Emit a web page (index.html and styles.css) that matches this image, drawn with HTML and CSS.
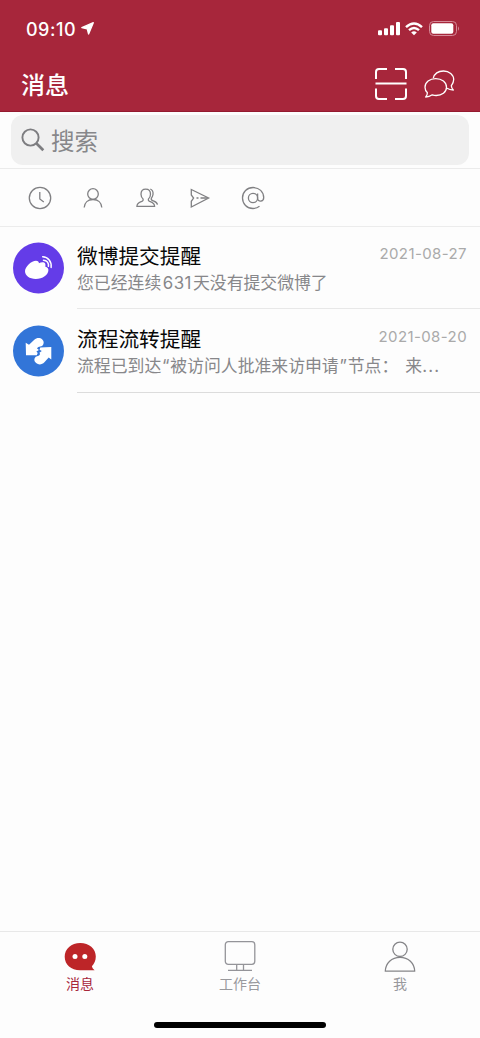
FILE: index.html
```html
<!DOCTYPE html>
<html lang="zh-CN">
<head>
<meta charset="utf-8">
<title>消息</title>
<link rel="stylesheet" href="styles.css">
</head>
<body>
<div class="app">
  <header class="header">
    <div class="status">
      <span class="time">09:10</span>
      <svg class="location" width="13" height="13" viewBox="0 0 13 13"><path d="M12.300.7 7.600 12 6.200 6.800.8 5.700z" fill="#fff" stroke="#fff" stroke-width="1.300" stroke-linejoin="round"/></svg>
      <svg class="signal" width="22" height="14" viewBox="0 0 22 14" fill="#fff"><rect x="0" y="8.3" width="4" height="5" rx="1"/><rect x="6" y="6.3" width="4" height="7" rx="1"/><rect x="12" y="3.3" width="4" height="10" rx="1"/><rect x="18" y="0" width="4" height="13.3" rx="1"/></svg>
      <svg class="wifi" width="18" height="14" viewBox="0 0 18 14" fill="none" stroke="#fff" stroke-width="2.4"><path d="M1 5.1Q9-2.3 17 5.1M4 8.1Q9 3.7 14 8.1"/><path d="M9 13.2 6.2 10.4Q9 8.2 11.8 10.4z" fill="#fff" stroke="none"/></svg>
      <svg class="battery" width="31" height="15" viewBox="0 0 31 15"><rect x=".5" y=".5" width="27" height="14" rx="4" fill="none" stroke="#d58a98"/><rect x="2.3" y="2.3" width="22" height="10.4" rx="2" fill="#fff"/><path d="M29 5.2q2 2.300 0 4.600z" fill="#d58a98"/></svg>
    </div>
    <div class="navbar">
      <h1 class="title">消息</h1>
      <svg class="scan" width="32" height="32" viewBox="0 0 32 32" fill="none" stroke="#fff" stroke-width="2"><path d="M1 11V4a3 3 0 0 1 3-3h8M20 1h8a3 3 0 0 1 3 3v7M1 20.500v7.500a3 3 0 0 0 3 3h8M20 31h8a3 3 0 0 0 3-3v-7.500M.5 15.500h31"/></svg>
      <svg class="chats" width="31" height="28" viewBox="0 0 31 28" fill="none" stroke="#fff" stroke-width="1.300" stroke-linejoin="round"><path d="M9.300 8.200C10.500 3.500 14.500 1 19.500 1c5.700 0 10.200 3.700 10.200 8.600 0 3-1.500 4.900-2.400 6.100.2 1.800 1 3.300 2 4.300-2.600 0-4.600-.6-6.300-1.700"/><path d="M11.700 8.600c6.200 0 10.800 3.600 10.800 8.600s-4.800 8.300-10.300 8.300c-1.500 0-2.600-.2-3.900-.7C6 26.300 4.200 26.900 1.700 27c1.100-1.300 1.700-2.800 1.700-4.200C1.900 21.400 1 19.500 1 17.300c0-5 4.700-8.700 10.700-8.700z"/></svg>
    </div>
  </header>
  <div class="search-row">
    <div class="search">
      <svg width="24" height="24" viewBox="0 0 24 24" fill="none" stroke="#7d7d80"><circle cx="9.500" cy="9.500" r="8.100" stroke-width="1.900"/><path d="m15.500 15.500 6.800 6.800" stroke-width="2.700"/></svg>
      <span>搜索</span>
    </div>
  </div>
  <nav class="filters">
    <svg width="24" height="24" viewBox="0 0 24 24"><circle cx="12" cy="12" r="10.700"/><path d="M11.800 6v7l4 3"/></svg>
    <svg width="24" height="24" viewBox="0 0 24 24"><circle cx="12" cy="8" r="5.300"/><path d="M3.200 21.500c.3-5 3.800-8 8.800-8s8.500 3 8.800 8"/></svg>
    <svg width="24" height="24" viewBox="0 0 24 24"><path d="M10.700 3.200c3 0 4.800 2 4.800 5 0 2.300-.9 3.600-2 4.700-.6 1.300.3 2.200 1.800 2.800 2.600 1 4.300 1.700 4.300 4.700H1.900c0-3 1.700-3.700 4.300-4.700 1.500-.6 2.400-1.500 1.800-2.800-1.100-1.100-2-2.400-2-4.700 0-3 1.700-5 4.700-5zM15.300 3c2.200.8 3 2.900 2.700 5.500-.2 1.700-1 2.800-1.700 3.900-.5 1.300.5 1.900 1.900 2.500 2 .7 3.900 1.300 4.300 3.800"/></svg>
    <svg width="24" height="24" viewBox="0 0 24 24"><path d="M3.300 3.500 20.600 12 3.300 21v-5.700L5.600 12 3.300 9z"/><path d="M8.500 12h2M12.500 12h7" stroke-width="1.700"/></svg>
    <svg width="24" height="24" viewBox="0 0 24 24"><circle cx="12" cy="12" r="4.600"/><path d="M16.600 7.400v5.200c0 3.600 6.100 3.500 6.100-.8C22.700 5.700 18.200 1.500 12.100 1.500 6 1.500 1.500 6.200 1.500 12s4.500 10.500 10.500 10.500c2.700 0 4.600-.7 6.500-2.200"/></svg>
  </nav>
  <main class="list">
    <article class="item">
      <svg class="avatar" width="52" height="52" viewBox="0 0 52 52"><circle cx="26.500" cy="26" r="25.500" fill="#643ce8"/><path d="M13 29.300C13 24.500 19.500 18.700 24 18.700c2 0 3 .9 2.900 2.500 2.200-1.400 5.500-1.500 6.300.4.500 1.200.1 2.300.2 3.200 2.100.5 3 1.700 3 3.200 0 4.700-5.700 9-12.700 9-6.200 0-10.700-3.300-10.700-7.700z" fill="#fff"/><path d="M30.700 14.800c5.300.1 9.200 4.800 8.400 10.600M31.500 18.200c3.300 0 5.500 2.800 4.900 6.100" fill="none" stroke="#fff" stroke-width="1.500" stroke-linecap="round"/></svg>
      <div class="content">
        <div class="line"><h2>微博提交提醒</h2><time>2021-08-27</time></div>
        <p>您已经连续<span class="number">631</span>天没有提交微博了</p>
      </div>
    </article>
    <article class="item second">
      <svg class="avatar" width="52" height="52" viewBox="0 0 52 52"><circle cx="26.500" cy="26" r="25.500" fill="#3275d8"/><path d="m13.700 17.700 3.300 2 5.300-5c2.500-2.200 5.800-2.200 8-.2 2 1.900 1.800 4.600-.2 6.400l-3.700 1-1.500 1.400 2 1.600-2.500 1.500 1.300 1.600-.9 2.200H14z" fill="#fff"/><path d="M28.200 22.500 39.300 22v12.500l-2.600-1.900-4.300 4.700c-2.500 2.600-5.900 2.700-8.300.8-2.300-1.900-2.300-4.500-.4-6.400l3.400-1.200 1-1.500-.7-1.300 2.400-1.700-2.200-1.300z" fill="#fff"/></svg>
      <div class="content">
        <div class="line"><h2>流程流转提醒</h2><time>2021-08-20</time></div>
        <p>流程已到达<span class="quote">“</span>被访问人批准来访申请<span class="quote">”</span>节点：<span class="rest">来<span class="dots">...</span></span></p>
      </div>
    </article>
  </main>
  <footer class="tabs">
    <a class="tab active"><svg width="34" height="32" viewBox="0 0 34 32"><path d="M17.300 2C26 2 32.800 7.700 32.800 15.500c0 4.300-1.600 7.300-3.900 9.700.3 1.500 1.300 2.900 2.700 4H17C8.200 29.200 1.700 23.700 1.700 15.800 1.700 7.800 8.300 2 17.300 2z" fill="#bd2528"/><circle cx="12" cy="15.500" r="2.500" fill="#fff"/><circle cx="21.800" cy="15.500" r="2.500" fill="#fff"/></svg><span>消息</span></a>
    <a class="tab"><svg width="34" height="32" viewBox="0 0 34 32" fill="none" stroke="#949499" stroke-width="1.300"><rect x="2.300" y=".7" width="29.500" height="22.600" rx="3"/><path d="M13.700 23.500V29M20.500 23.500V29M5 29.300h24"/></svg><span>工作台</span></a>
    <a class="tab"><svg width="34" height="32" viewBox="0 0 34 32" fill="none" stroke="#858588" stroke-width="1.300"><circle cx="17" cy="8.300" r="7.200"/><path d="M2.300 30.200C2.500 22 8.700 16.300 17 16.300S31.500 22 31.700 30.200z" stroke-linejoin="round"/></svg><span>我</span></a>
  </footer>
  <div class="home-bar"></div>
</div>
</body>
</html>
```
FILE: styles.css
```css
* { box-sizing: border-box; }
body { margin: 0; background: #fdfdfd; font-family: Inter, "Noto Sans CJK SC", sans-serif; }
.app { width: 480px; height: 1038px; display: flex; flex-direction: column; overflow: hidden; }
svg { display: block; flex: none; }
h1, h2, p { margin: 0; font-weight: 400; }
.header { height: 112px; background: #a7263b; color: #fff; border-bottom: 1px solid #941a2f; }
.status { height: 57px; padding: 0 20px 0 26px; display: flex; align-items: center; }
.time { font-size: 18px; font-weight: 500; width: 54px; letter-spacing: .5px; white-space: nowrap; padding-top: 1px; }
.location { margin-left: 1px; }
.signal { margin-left: auto; }
.wifi { margin-left: 5px; }
.battery { margin-left: 6px; }
.navbar { height: 54px; padding: 0 25px 0 21px; display: flex; align-items: center; }
.title { font-size: 24px; line-height: 36px; font-weight: 500; padding-top: 4px; }
.scan { margin-left: auto; margin-right: 17px; }
.search-row { height: 57px; padding: 3px 11px; border-bottom: 1px solid #ebebeb; }
.search { height: 50px; border-radius: 12px; background: #f0f0f0; padding-left: 10px; display: flex; align-items: center; gap: 6px; font-size: 23.500px; color: #87878a; }
.search span { line-height: 36px; padding-top: 3px; }
.filters { height: 58px; padding-left: 28px; border-bottom: 1px solid #ececec; display: flex; align-items: center; gap: 29.300px; fill: none; stroke: #808083; stroke-width: 1.300; }
.list { flex: 1; }
.item { height: 82px; padding-left: 12px; display: flex; gap: 13px; }
.second { height: 84px; }
.avatar { margin-top: 15px; }
.second .avatar { margin-top: 16px; }
.content { flex: 1; border-bottom: 1px solid #e8e8e8; padding-top: 15px; }
.second .content { padding-top: 16px; border-color: #dcdcdc; }
.line { display: flex; justify-content: space-between; padding-right: 13px; height: 29px; }
h2 { font-size: 20.700px; line-height: 30px; color: #080808; }
time { font-size: 15px; line-height: 23px; color: #aaa; letter-spacing: .4px; }
p { font-size: 16.850px; line-height: 24px; color: #87878a; white-space: nowrap; }
.number { letter-spacing: .5px; padding: 0 1px 0 1.500px; }
.quote { font-family: Inter, sans-serif; padding: 0 .8px; }
.rest { margin-left: 7px; }
.dots { letter-spacing: 1.200px; }
.tabs { height: 74px; border-top: 1px solid #e8e8e8; display: flex; }
.tab { flex: 1; padding-top: 9px; display: flex; flex-direction: column; align-items: center; font-size: 14px; line-height: 22px; color: #99999d; }
.active { color: #a7263b; }
.home-bar { width: 172px; height: 6px; margin: 17px auto 10px; border-radius: 3px; background: #000; }
```
